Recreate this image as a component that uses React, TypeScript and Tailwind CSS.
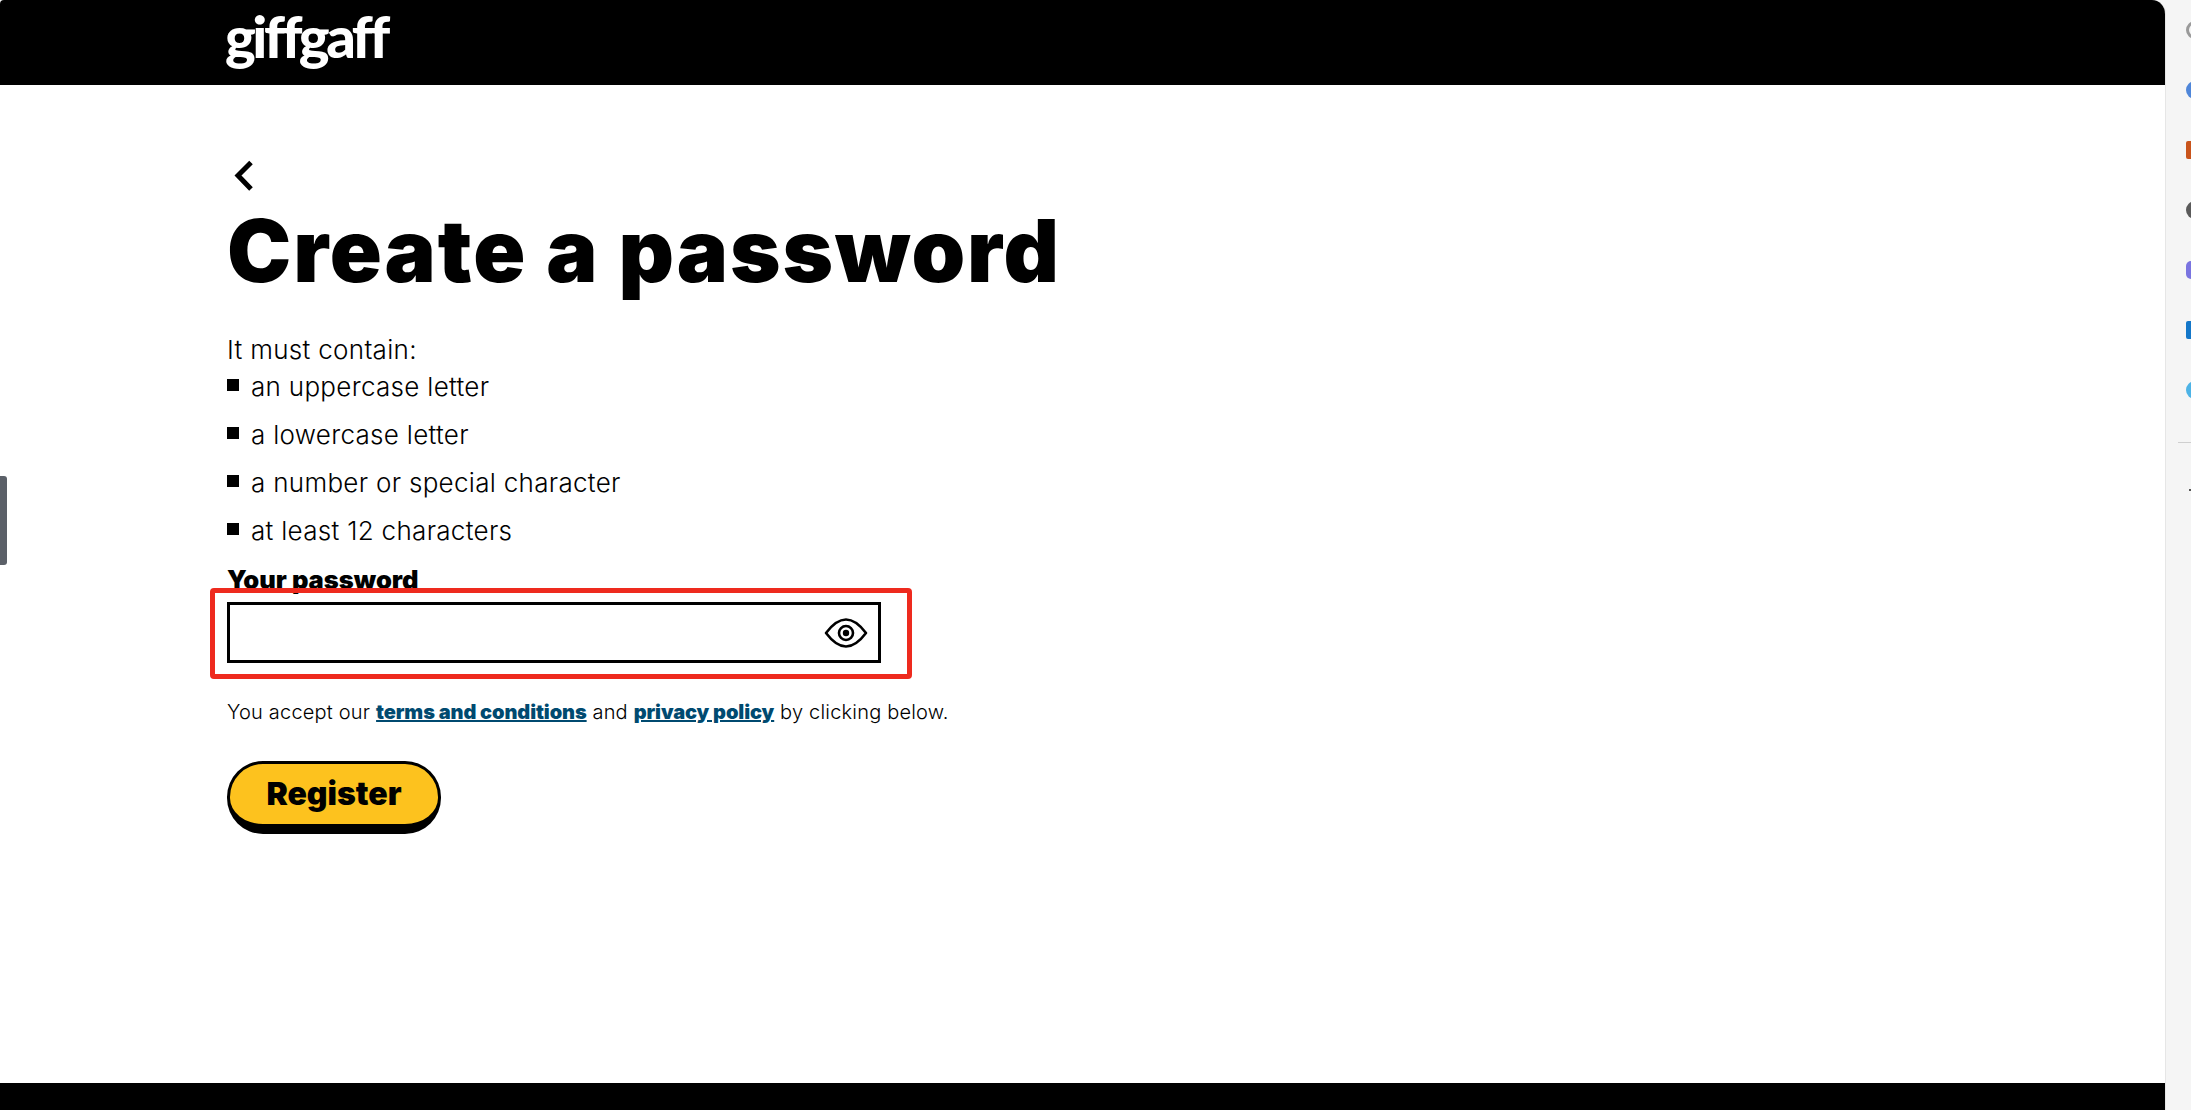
const rules = [
  "an uppercase letter",
  "a lowercase letter",
  "a number or special character",
  "at least 12 characters",
];

const railIcons = [
  "rounded-full border-[3px] border-[#9a9a9a]",
  "rounded-full bg-[#4f86d9]",
  "rounded-[2px] bg-[#c9541c]",
  "rounded-full bg-[#5a5a5a]",
  "rounded-[5px] bg-[#7a74e0]",
  "rounded-[2px] bg-[#1477c9]",
  "rounded-full bg-[#4db3e6]",
];

const BackIcon = () => (
  <svg width="20" height="32" viewBox="0 0 20 32" fill="none" stroke="black" strokeWidth="5">
    <path d="M18 2.5 L5 15.5 L18 29" />
  </svg>
);

const EyeIcon = () => (
  <svg width="44" height="32" viewBox="0 0 44 32" fill="none" stroke="black" strokeWidth="2.6">
    <path d="M2 16 C8 8 14 2.5 22 2.5 C30 2.5 36 8 42 16 C36 24 30 29.5 22 29.5 C14 29.5 8 24 2 16 Z" strokeLinejoin="round" />
    <circle cx="22" cy="16" r="7" />
    <circle cx="22" cy="16" r="3.2" fill="black" stroke="none" />
  </svg>
);

export default function App() {
  return (
    <div className="relative flex h-[1110px] w-full overflow-hidden bg-[#f5f5f5] font-['Inter',sans-serif] text-black">
      <div className="absolute left-0 top-[476px] z-10 h-[89px] w-[7px] rounded-r-[3px] bg-[#5b6068]" />

      <main className="flex w-[2166px] shrink-0 flex-col overflow-hidden rounded-tl-[4px] rounded-tr-[14px] border-r border-[#e6e6e6] bg-white">
        <header className="flex h-[85px] shrink-0 items-start bg-black pl-[225px]">
          <span className="mt-[5px] font-['Lato',sans-serif] text-[58px] font-black leading-[62px] tracking-[-3.5px] text-white">giffgaff</span>
        </header>

        <section className="flex flex-1 flex-col items-start pl-[227px]">
          <div className="ml-[6px] mt-[75px]">
            <BackIcon />
          </div>
          <h1 className="mt-[14px] text-[86px] font-black leading-[90px] tracking-[1.9px]">
            Create a password
          </h1>
          <p className="mt-[42px] text-[26px] font-light leading-[24px] tracking-[0.3px]">It must contain:</p>
          <ul className="flex flex-col">
            {rules.map((rule) => (
              <li key={rule} className="flex h-[48px] items-center gap-[12px] text-[26px] font-light tracking-[0.3px]">
                <span className="mb-[2px] h-[12px] w-[12px] bg-black" />
                {rule}
              </li>
            ))}
          </ul>
          <label className="mt-[11px] text-[25.5px] font-black leading-[30px]">Your password</label>
          <div className="relative mt-[7px] flex h-[61px] w-[654px] items-center justify-end border-[3px] border-black pr-[10px]">
            <EyeIcon />
            <div className="absolute -bottom-[19px] -left-[20px] -right-[34px] -top-[17px] rounded-[4px] border-[5px] border-[#ee2a1e]" />
          </div>
          <p className="mt-[36px] text-[20px] font-light leading-[26px] tracking-[0.2px]">
            You accept our{" "}
            <a className="font-black tracking-[-0.1px] text-[#004a70] underline">terms and conditions</a> and{" "}
            <a className="font-black tracking-[-0.1px] text-[#004a70] underline">privacy policy</a> by clicking below.
          </p>
          <button className="mt-[36px] h-[73px] w-[214px] rounded-[36px] border-[3px] border-b-[10px] border-black bg-[#fdc21e] text-[32px] font-black">
            Register
          </button>
        </section>

        <footer className="h-[27px] shrink-0 bg-black" />
      </main>

      <aside className="flex flex-1 flex-col items-start overflow-hidden pl-[20px] pt-[21px]">
        {railIcons.map((shape) => (
          <span key={shape} className={`mb-[42px] h-[18px] w-[18px] shrink-0 ${shape}`} />
        ))}
      </aside>
      <div className="absolute left-[2178px] top-[442px] h-px w-[13px] bg-[#cfcfcf]" />
      <div className="absolute left-[2189px] top-[489px] h-[2px] w-[2px] bg-[#555]" />
    </div>
  );
}
